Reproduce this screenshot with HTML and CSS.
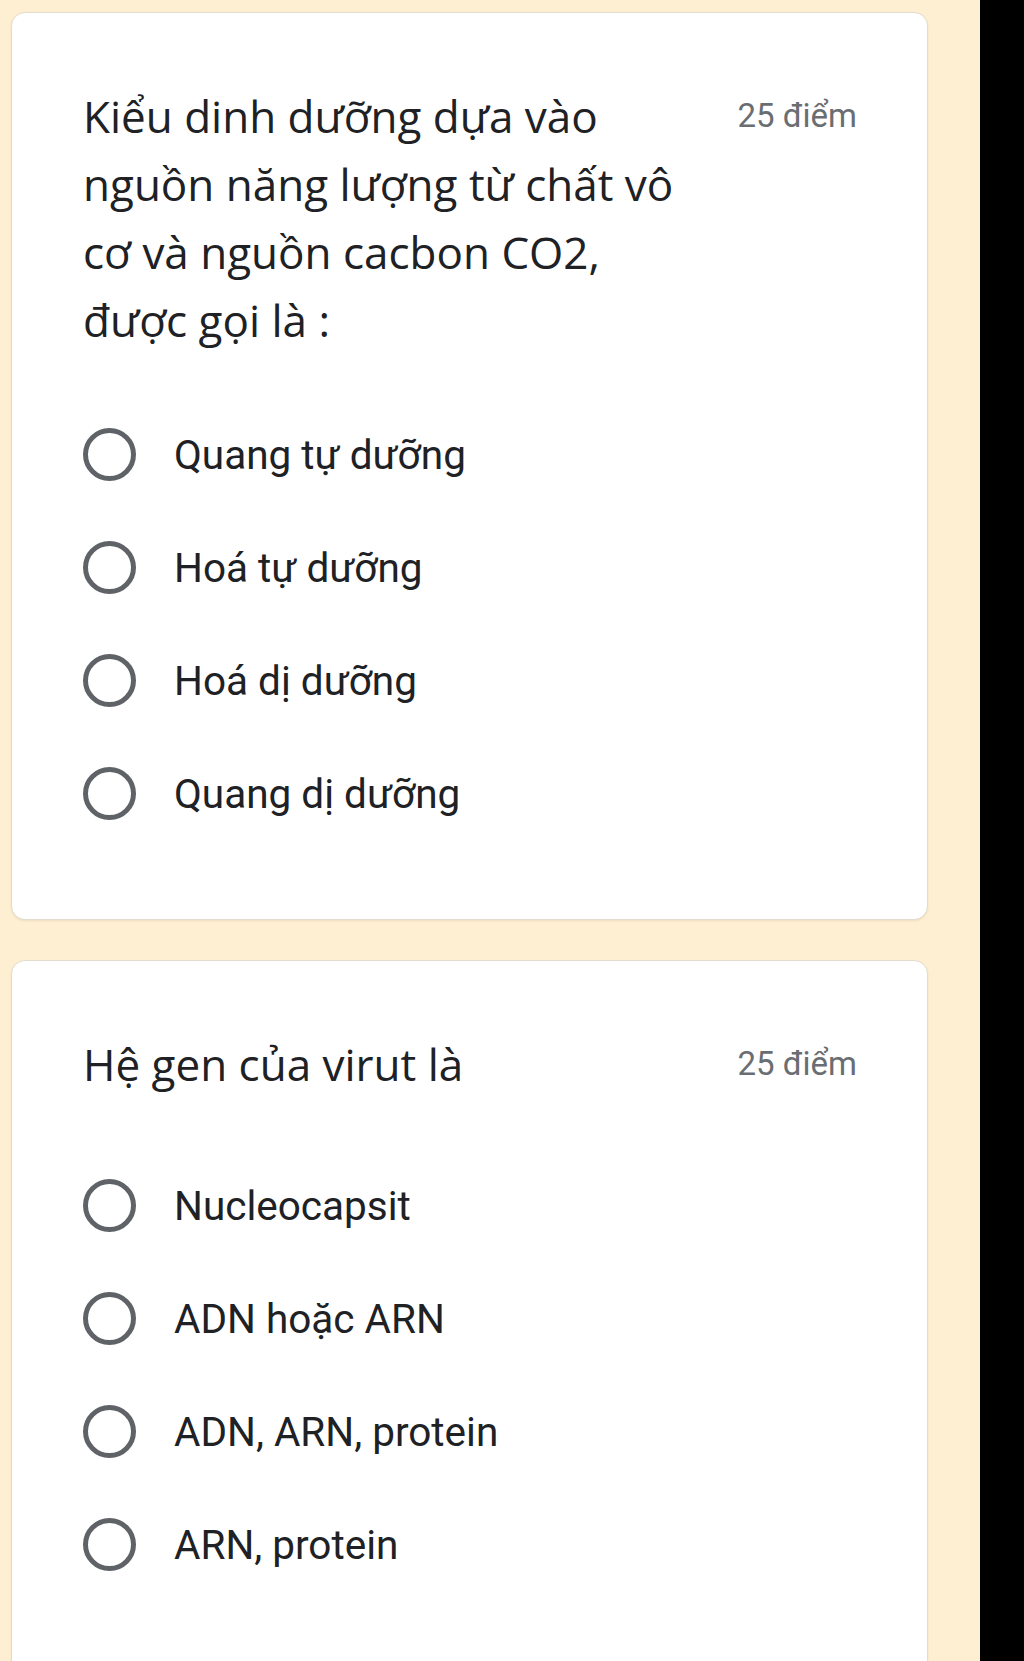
FILE: index.html
```html
<!DOCTYPE html>
<html lang="vi">
<head>
<meta charset="utf-8">
<title>Câu hỏi</title>
<link rel="stylesheet" href="styles.css">
</head>
<body>
<div class="page">
  <main class="content">
    <section class="card card-first">
      <div class="head">
        <div class="title">Kiểu dinh dưỡng dựa vào nguồn năng lượng từ chất vô cơ và nguồn cacbon CO2, được gọi là :</div>
        <div class="points">25 điểm</div>
      </div>
      <ul class="options">
        <li class="option"><span class="radio"></span><span class="label">Quang tự dưỡng</span></li>
        <li class="option"><span class="radio"></span><span class="label">Hoá tự dưỡng</span></li>
        <li class="option"><span class="radio"></span><span class="label">Hoá dị dưỡng</span></li>
        <li class="option"><span class="radio"></span><span class="label">Quang dị dưỡng</span></li>
      </ul>
    </section>
    <section class="card card-second">
      <div class="head">
        <div class="title">Hệ gen của virut là</div>
        <div class="points">25 điểm</div>
      </div>
      <ul class="options">
        <li class="option"><span class="radio"></span><span class="label">Nucleocapsit</span></li>
        <li class="option"><span class="radio"></span><span class="label">ADN hoặc ARN</span></li>
        <li class="option"><span class="radio"></span><span class="label">ADN, ARN, protein</span></li>
        <li class="option"><span class="radio"></span><span class="label">ARN, protein</span></li>
      </ul>
    </section>
  </main>
  <div class="side"></div>
</div>
</body>
</html>
```
FILE: styles.css
```css
html, body {
  margin: 0;
  padding: 0;
  height: 100%;
}
body {
  background: #000;
  overflow: hidden;
}
.page {
  display: flex;
  height: 1661px;
}
.content {
  width: 980px;
  background: #feefd2;
  padding: 12px 0 0 11px;
  box-sizing: border-box;
  display: flex;
  flex-direction: column;
  gap: 40px;
  overflow: hidden;
}
.side {
  flex: 1;
  background: #000;
}
.card {
  width: 917px;
  box-sizing: border-box;
  background: #fff;
  border: 1px solid #e3ddd0;
  border-radius: 14px;
  padding: 69px 70px 0 71px;
  box-shadow: 0 1px 2px rgba(120, 100, 60, 0.12);
  flex-shrink: 0;
}
.card-first {
  height: 908px;
}
.card-second {
  height: 760px;
}
.head {
  display: flex;
  justify-content: space-between;
  align-items: flex-start;
}
.title {
  font-family: "Open Sans", "Noto Sans", sans-serif;
  font-size: 44px;
  line-height: 68px;
  color: #202124;
  width: 620px;
}
.points {
  font-family: "Roboto", "Noto Sans", sans-serif;
  font-size: 33px;
  line-height: 68px;
  color: #6a6d71;
  white-space: nowrap;
}
.options {
  list-style: none;
  margin: 44px 0 0 0;
  padding: 0;
}
.card-second .options {
  margin-top: 51px;
}
.option {
  display: flex;
  align-items: center;
  height: 113px;
  gap: 38px;
}
.radio {
  width: 53px;
  height: 53px;
  box-sizing: border-box;
  border: 5px solid #5f6368;
  border-radius: 50%;
  flex-shrink: 0;
}
.label {
  font-family: "Roboto", "Noto Sans", sans-serif;
  font-size: 40.5px;
  color: #202124;
}
```
